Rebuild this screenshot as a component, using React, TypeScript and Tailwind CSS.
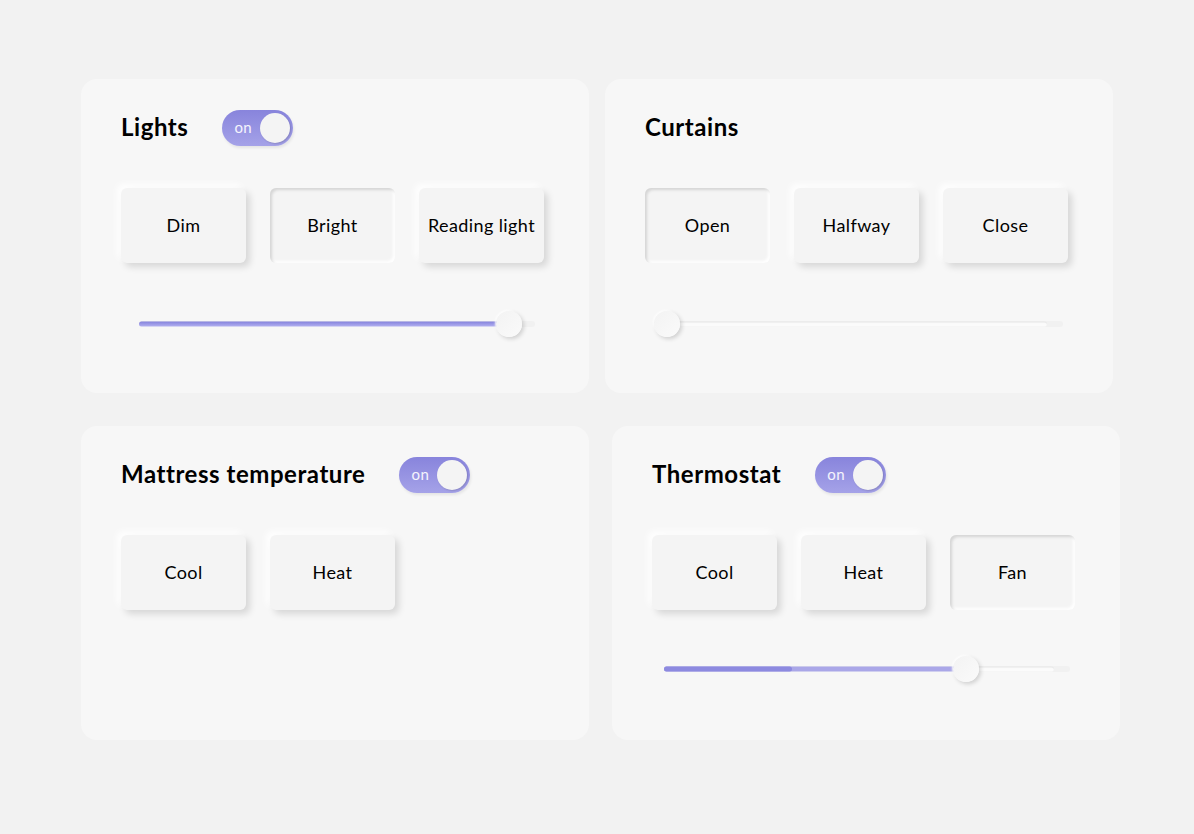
import React from "react";

const raised =
  "shadow-[4px_4px_7px_rgba(0,0,0,0.13),-4px_-4px_7px_rgba(255,255,255,0.95)]";
const pressed =
  "shadow-[inset_2px_2px_3px_rgba(0,0,0,0.13),inset_-2px_-2px_3px_rgba(255,255,255,0.95)]";

function Toggle() {
  return (
    <div className="relative flex items-center w-[71px] h-[36px] rounded-full bg-gradient-to-b from-[#8884dc] to-[#a5a2e8] shadow-[1px_2px_3px_rgba(0,0,0,0.08)]">
      <span className="ml-[12px] text-[15px] tracking-[0.4px] text-white/90 leading-none pb-[1px]">on</span>
      <span className="absolute right-[3px] top-[3px] w-[30px] h-[30px] rounded-full bg-[#f4f4f4] shadow-[1px_1px_2px_rgba(0,0,0,0.15)]" />
    </div>
  );
}

function Btn({ label, down }: { label: string; down?: boolean }) {
  return (
    <div
      className={`w-[125px] h-[75px] rounded-[6px] bg-[#f4f4f4] flex items-center justify-center text-[18px] tracking-[0.4px] text-black ${
        down ? pressed : raised
      }`}
    >
      {label}
    </div>
  );
}

function Slider({
  className,
  value,
  fills,
}: {
  className: string;
  value: number;
  fills: { from: number; to: number; color: string }[];
}) {
  return (
    <div className={`relative h-[26px] ${className}`}>
      <div className="absolute left-0 right-0 top-1/2 -translate-y-1/2 h-[6px] rounded-full bg-[#f1f1f1]" />
      <div className="absolute left-0 right-[16px] top-1/2 -translate-y-1/2 h-[5px] rounded-full bg-[#fbfbfb] shadow-[inset_0_1px_1px_rgba(0,0,0,0.09)]" />
      {fills.map((f, i) => (
        <div
          key={i}
          className={`absolute top-1/2 -translate-y-1/2 h-[5px] rounded-full ${f.color}`}
          style={{ left: `${f.from}%`, width: `${f.to - f.from}%` }}
        />
      ))}
      <div
        className="absolute top-1/2 -translate-y-1/2 -translate-x-1/2 w-[26px] h-[26px] rounded-full bg-gradient-to-br from-[#f3f3f3] to-[#fafafa] shadow-[2px_2px_4px_rgba(0,0,0,0.16),-1px_-1px_2px_rgba(255,255,255,1)]"
        style={{ left: `${value}%` }}
      />
    </div>
  );
}

function Card({
  title,
  toggle,
  buttons,
  children,
}: {
  title: string;
  toggle?: boolean;
  buttons: { label: string; down?: boolean }[];
  children?: React.ReactNode;
}) {
  return (
    <div className="w-[508px] h-[314px] rounded-[16px] bg-[#f7f7f7] pl-[40px] pt-[31px]">
      <div className="flex items-center gap-[34px] h-[36px]">
        <h2 className="text-[24px] font-bold text-black tracking-[0.55px] -mt-[2px]">{title}</h2>
        {toggle && <Toggle />}
      </div>
      <div className="flex gap-[24px] mt-[42px]">
        {buttons.map((b) => (
          <Btn key={b.label} label={b.label} down={b.down} />
        ))}
      </div>
      {children}
    </div>
  );
}

export default function App() {
  return (
    <div
      className="min-h-[834px] w-[1194px] bg-[#f2f2f2] pt-[79px] pl-[81px] flex flex-col gap-[33px]"
      style={{ fontFamily: "Lato, 'Noto Sans', sans-serif" }}
    >
      <div className="flex gap-[16px]">
        <Card
          title="Lights"
          toggle
          buttons={[{ label: "Dim" }, { label: "Bright", down: true }, { label: "Reading light" }]}
        >
          <Slider
            className="ml-[18px] w-[396px] mt-[48px]"
            value={93.5}
            fills={[{ from: 0, to: 93.5, color: "bg-gradient-to-b from-[#8582dc] to-[#b2b0f0]" }]}
          />
        </Card>
        <Card
          title="Curtains"
          buttons={[{ label: "Open", down: true }, { label: "Halfway" }, { label: "Close" }]}
        >
          <Slider className="ml-[9px] w-[409px] mt-[48px]" value={3.2} fills={[]} />
        </Card>
      </div>
      <div className="flex gap-[23px]">
        <Card
          title="Mattress temperature"
          toggle
          buttons={[{ label: "Cool" }, { label: "Heat" }]}
        />
        <Card
          title="Thermostat"
          toggle
          buttons={[{ label: "Cool" }, { label: "Heat" }, { label: "Fan", down: true }]}
        >
          <Slider
            className="ml-[12px] w-[406px] mt-[46px]"
            value={74.4}
            fills={[
              { from: 0, to: 72.5, color: "bg-[#aaa7e8]" },
              { from: 0, to: 31.5, color: "bg-[#8d8ae0]" },
            ]}
          />
        </Card>
      </div>
    </div>
  );
}
